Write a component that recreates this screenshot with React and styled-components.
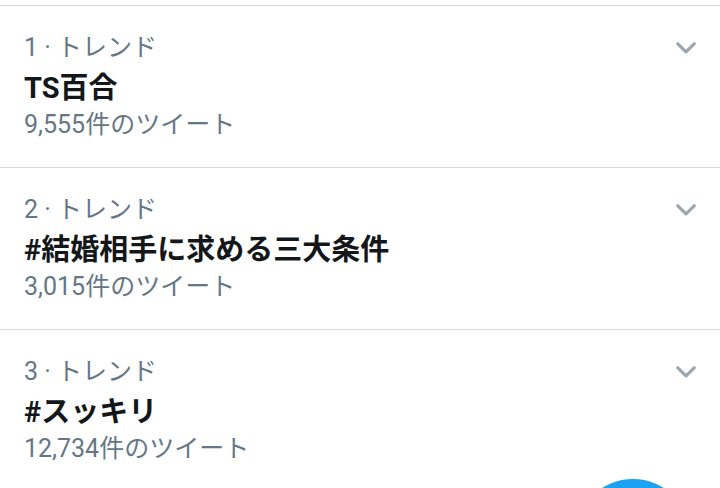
import React from 'react'
import styled, { createGlobalStyle } from 'styled-components'

const GlobalStyle = createGlobalStyle`
  html, body {
    margin: 0;
    padding: 0;
    background: #ffffff;
    overflow: hidden;
  }
  body {
    font-family: Roboto, "Noto Sans CJK JP", sans-serif;
  }
`

const trends = [
  { rank: 1, name: 'TS百合', count: '9,555' },
  { rank: 2, name: '#結婚相手に求める三大条件', count: '3,015' },
  { rank: 3, name: '#スッキリ', count: '12,734' },
]

const App = () => {
  return (
    <>
      <GlobalStyle />
      <TrendList>
        {trends.map((t) => (
          <TrendRow key={t.rank}>
            <TrendBody>
              <TrendMeta>{t.rank} · トレンド</TrendMeta>
              <TrendName>{t.name}</TrendName>
              <TrendCount>{t.count}件のツイート</TrendCount>
            </TrendBody>
            <Chevron viewBox="0 0 20 12" aria-hidden="true">
              <polyline points="1.8,1.8 10,9.8 18.2,1.8" />
            </Chevron>
          </TrendRow>
        ))}
      </TrendList>
      <Fab />
    </>
  )
}

export default App

const TrendList = styled.div`
  padding-top: 5px;
`

const TrendRow = styled.div`
  box-sizing: border-box;
  height: 162px;
  border-top: 1px solid #d3d9de;
  padding: 24px 24px 0 24px;
  display: grid;
  grid-template-columns: 1fr 20px;
  align-items: start;
`

const TrendBody = styled.div`
  display: flex;
  flex-direction: column;
`

const TrendMeta = styled.div`
  font-size: 25px;
  line-height: 36px;
  color: #657786;
  white-space: nowrap;
`

const TrendName = styled.div`
  font-size: 29px;
  line-height: 44px;
  font-weight: 700;
  color: #14171a;
  white-space: nowrap;
`

const TrendCount = styled.div`
  font-size: 25px;
  line-height: 30px;
  color: #657786;
  white-space: nowrap;
`

const Chevron = styled.svg`
  width: 20px;
  height: 12px;
  margin-top: 12px;
  fill: none;
  stroke: #9ba6b0;
  stroke-width: 3.2;
  stroke-linecap: round;
  stroke-linejoin: round;
`

const Fab = styled.div`
  position: fixed;
  top: 479px;
  left: 575px;
  width: 116px;
  height: 116px;
  border-radius: 50%;
  background: #1da1f2;
`
